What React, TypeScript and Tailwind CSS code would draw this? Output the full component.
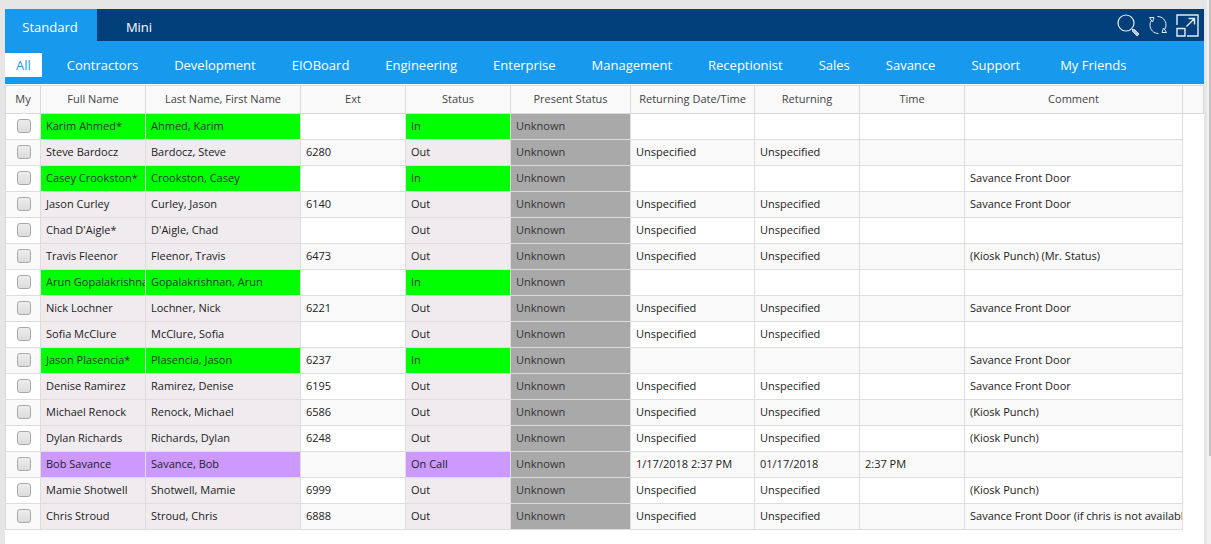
const views = ["Standard", "Mini"];

const groups = [
  "All",
  "Contractors",
  "Development",
  "EIOBoard",
  "Engineering",
  "Enterprise",
  "Management",
  "Receptionist",
  "Sales",
  "Savance",
  "Support",
  "My Friends",
];

const columns = [
  { label: "My", width: "w-[35px]" },
  { label: "Full Name", width: "w-[105px]" },
  { label: "Last Name, First Name", width: "w-[155px]" },
  { label: "Ext", width: "w-[105px]" },
  { label: "Status", width: "w-[105px]" },
  { label: "Present Status", width: "w-[120px]" },
  { label: "Returning Date/Time", width: "w-[124px]" },
  { label: "Returning", width: "w-[105px]" },
  { label: "Time", width: "w-[105px]" },
  { label: "Comment", width: "" },
];

type Person = {
  name: string;
  lastFirst: string;
  ext?: string;
  status: "In" | "Out" | "On Call";
  returning?: string;
  date?: string;
  time?: string;
  comment?: string;
};

const away = { returning: "Unspecified", date: "Unspecified" };

const people: Person[] = [
  { name: "Karim Ahmed*", lastFirst: "Ahmed, Karim", status: "In" },
  { name: "Steve Bardocz", lastFirst: "Bardocz, Steve", ext: "6280", status: "Out", ...away },
  { name: "Casey Crookston*", lastFirst: "Crookston, Casey", status: "In", comment: "Savance Front Door" },
  { name: "Jason Curley", lastFirst: "Curley, Jason", ext: "6140", status: "Out", ...away, comment: "Savance Front Door" },
  { name: "Chad D'Aigle*", lastFirst: "D'Aigle, Chad", status: "Out", ...away },
  { name: "Travis Fleenor", lastFirst: "Fleenor, Travis", ext: "6473", status: "Out", ...away, comment: "(Kiosk Punch) (Mr. Status)" },
  { name: "Arun Gopalakrishna", lastFirst: "Gopalakrishnan, Arun", status: "In" },
  { name: "Nick Lochner", lastFirst: "Lochner, Nick", ext: "6221", status: "Out", ...away, comment: "Savance Front Door" },
  { name: "Sofia McClure", lastFirst: "McClure, Sofia", status: "Out", ...away },
  { name: "Jason Plasencia*", lastFirst: "Plasencia, Jason", ext: "6237", status: "In", comment: "Savance Front Door" },
  { name: "Denise Ramirez", lastFirst: "Ramirez, Denise", ext: "6195", status: "Out", ...away, comment: "Savance Front Door" },
  { name: "Michael Renock", lastFirst: "Renock, Michael", ext: "6586", status: "Out", ...away, comment: "(Kiosk Punch)" },
  { name: "Dylan Richards", lastFirst: "Richards, Dylan", ext: "6248", status: "Out", ...away, comment: "(Kiosk Punch)" },
  { name: "Bob Savance", lastFirst: "Savance, Bob", status: "On Call", returning: "1/17/2018 2:37 PM", date: "01/17/2018", time: "2:37 PM" },
  { name: "Mamie Shotwell", lastFirst: "Shotwell, Mamie", ext: "6999", status: "Out", ...away, comment: "(Kiosk Punch)" },
  { name: "Chris Stroud", lastFirst: "Stroud, Chris", ext: "6888", status: "Out", ...away, comment: "Savance Front Door (if chris is not available" },
];

const statusColors = {
  In: "bg-[#00ff00] text-[#333333]",
  Out: "bg-[#efebef]",
  "On Call": "bg-[#cc99ff]",
};

const cell =
  "h-[26px] overflow-hidden border-r border-b border-[#dddddd] pb-[2px] pl-[5px] whitespace-nowrap";

const Toolbar = () => (
  <div className="flex items-center gap-2 pr-[5px]">
    <button type="button" aria-label="Search">
      <svg width="23" height="23" viewBox="0 0 23 23" fill="none" stroke="#e4edf5">
        <circle cx="9" cy="9" r="8" strokeWidth="1.2" />
        <path d="M14.5 14.5l1.5 1.5M15.2 17l1.8-1.8 5 4.8-1.9 1.9z" fill="#b5c8da" strokeWidth="1" />
      </svg>
    </button>
    <button type="button" aria-label="Refresh">
      <svg width="20" height="20" viewBox="0 0 20 20" fill="none" stroke="#e4edf5">
        <path d="M9.500 1.500c5 0 8.500 3.800 8.500 8.500 0 1.500-.3 3-1 4M10.500 18.500c-5 0-8.500-3.800-8.500-8.500 0-1.500.3-3 1-4" />
        <path d="M1.500 2.500H6L4.500 7zM18.500 17.500H14l1.500-4.500z" />
      </svg>
    </button>
    <button type="button" aria-label="Expand">
      <svg width="23" height="23" viewBox="0 0 23 23" fill="none" stroke="#e4edf5" strokeWidth="1.4">
        <path d="M1 11V1h21v21H11M1 14.500h8V22H1zM10.500 12.500l8-8M12.500 4.500h6v6" />
      </svg>
    </button>
  </div>
);

const StatusTable = () => (
  <table className="w-full table-fixed border-separate border-spacing-0 border-t border-l border-[#d9d9d9] text-[11px] leading-4 text-[#222222]">
    <thead>
      <tr className="bg-[#f9f9f9] text-[#444444]">
        {columns.map((column) => (
          <th
            key={column.label}
            className={`h-7 border-r border-b border-[#d9d9d9] p-0 pb-[2px] font-medium whitespace-nowrap ${column.width}`}
          >
            {column.label}
          </th>
        ))}
        <th className="w-[21px] border-r border-b border-[#d9d9d9] p-0" />
      </tr>
    </thead>
    <tbody>
      {people.map((person) => (
        <tr key={person.name} className="bg-white even:bg-[#f9f9f9]">
          <td className="border-r border-b border-[#dddddd] p-0 pb-px pl-[2px]">
            <input
              type="checkbox"
              aria-label={person.name}
              className="mx-auto block size-[14px] appearance-none rounded-[3px] border border-[#a9a9a9] bg-linear-to-b from-[#ececec] to-[#dcdcdc] checked:bg-[#179aee]"
            />
          </td>
          <td className={`${cell} ${statusColors[person.status]}`}>{person.name}</td>
          <td className={`${cell} ${statusColors[person.status]}`}>{person.lastFirst}</td>
          <td className={cell}>{person.ext}</td>
          <td className={`${cell} ${statusColors[person.status]}`}>{person.status}</td>
          <td className={`${cell} bg-[#a9a9a9] text-[#333333]`}>Unknown</td>
          <td className={cell}>{person.returning}</td>
          <td className={cell}>{person.date}</td>
          <td className={cell}>{person.time}</td>
          <td className={cell}>{person.comment}</td>
          <td className="bg-white" />
        </tr>
      ))}
    </tbody>
  </table>
);

export default function App() {
  return (
    <div className="flex min-h-screen bg-[#e6e6e6] font-['Open_Sans',sans-serif]">
      <main className="mt-[9px] ml-[5px] min-w-0 flex-1 bg-white">
        <header className="flex h-8 justify-between bg-[#003f7a]">
          <nav className="flex">
            {views.map((view, i) => (
              <button
                key={view}
                type="button"
                className={`pt-[6px] text-[13px] text-white ${i === 0 ? "w-[92px] bg-[#179aee] pr-[2px]" : "w-[84px]"}`}
              >
                {view}
              </button>
            ))}
          </nav>
          <Toolbar />
        </header>
        <nav className="mb-px flex h-[43px] items-center gap-[14px] bg-[#179aee] pt-[5px]">
          {groups.map((group, i) => (
            <button
              key={group}
              type="button"
              className={`h-6 px-[11px] pt-px text-[13px] whitespace-nowrap last:ml-1 ${i === 0 ? "bg-white text-[#179aee]" : "text-white"}`}
            >
              {group}
            </button>
          ))}
        </nav>
        <StatusTable />
      </main>
      <div className="w-[3px]" />
      <div className="w-1 bg-[#f1f1f1]">
        <div className="ml-auto h-[456px] w-[2px] bg-[#c1c1c1]" />
      </div>
    </div>
  );
}
